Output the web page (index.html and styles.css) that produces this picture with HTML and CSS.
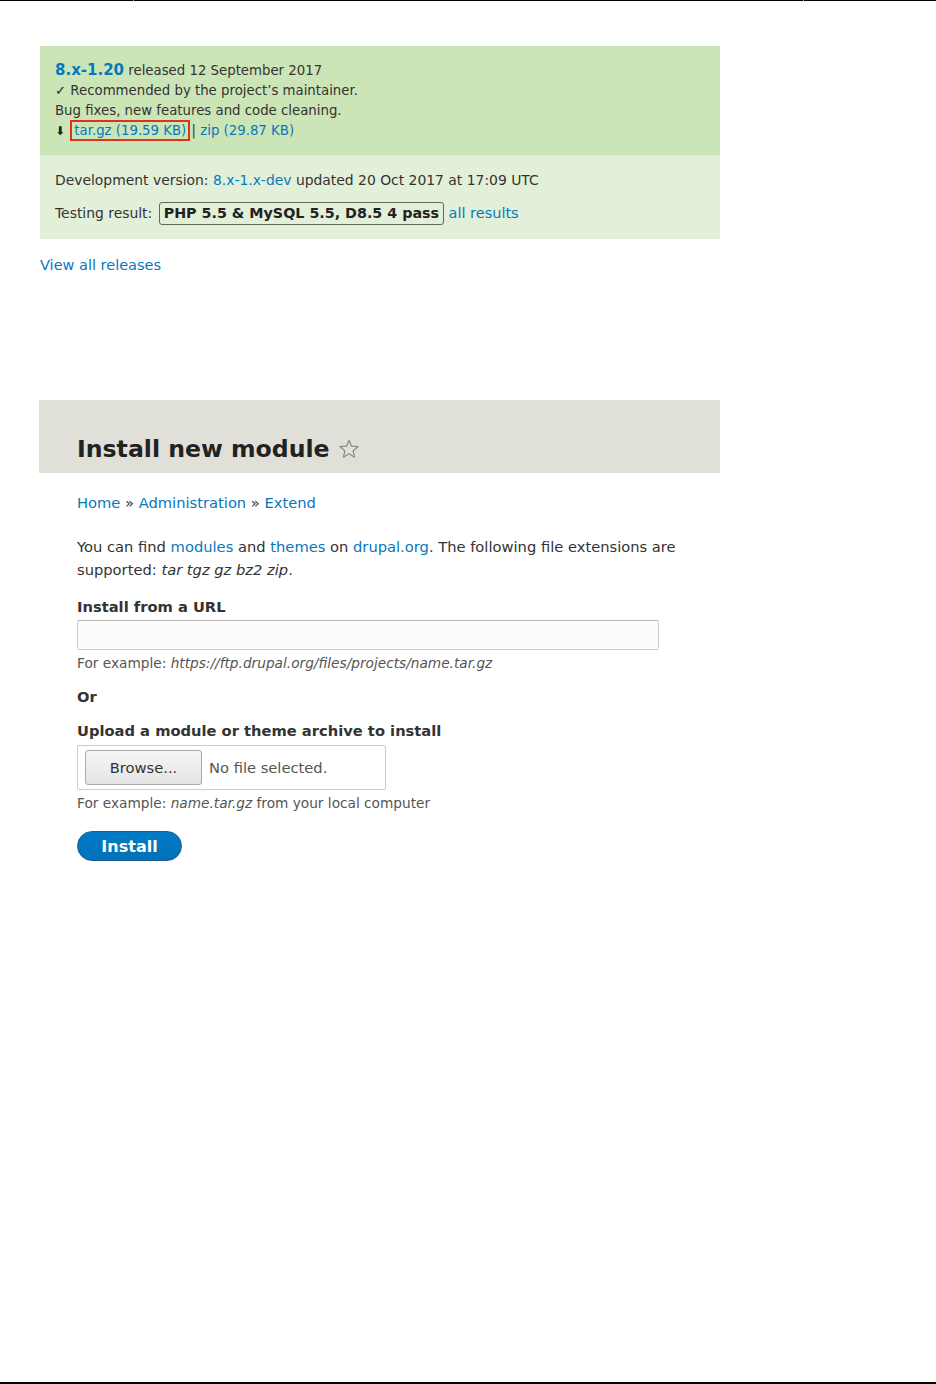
FILE: index.html
```html
<!DOCTYPE html>
<html lang="en">
<head>
    <meta charset="UTF-8">
    <title>Install new module</title>
    <link rel="stylesheet" href="styles.css">
</head>
<body>

    <div class="topline">
        <span class="seg seg1"></span>
        <span class="seg seg2"></span>
        <span class="seg seg3"></span>
    </div>

    <!-- release block -->
    <div class="release">
        <div class="rec">
            <p><a href="#" class="ver">8.x-1.20</a> released 12 September 2017</p>
            <p>&#10003; Recommended by the project&rsquo;s maintainer.</p>
            <p>Bug fixes, new features and code cleaning.</p>
            <p><span class="dl">&#11015;</span> <a href="#" class="hl">tar.gz (19.59 KB)</a> | <a href="#">zip (29.87 KB)</a></p>
        </div>
        <div class="dev">
            <p>Development version: <a href="#">8.x-1.x-dev</a> updated 20 Oct 2017 at 17:09 UTC</p>
            <p class="test">Testing result: <span class="pass">PHP 5.5 &amp; MySQL 5.5, D8.5 4 pass</span> <a href="#">all results</a></p>
        </div>
    </div>
    <a href="#" class="allrel">View all releases</a>

    <!-- install page -->
    <div class="page">
        <div class="head">
            <h1>Install new module
                <svg class="star" width="22" height="22" viewBox="0 0 24 24">
                    <path d="M12 2.5l2.8 6.4 6.9.6-5.2 4.6 1.6 6.8L12 17.3l-6.1 3.6 1.6-6.8-5.2-4.6 6.9-.6z" fill="none" stroke="#8a8a80" stroke-width="1.3" stroke-linejoin="round"/>
                </svg>
            </h1>
        </div>
        <div class="content">
            <div class="crumbs"><a href="#">Home</a> &raquo; <a href="#">Administration</a> &raquo; <a href="#">Extend</a></div>

            <p class="intro">You can find <a href="#">modules</a> and <a href="#">themes</a> on <a href="#">drupal.org</a>. The following file extensions are supported: <em>tar tgz gz bz2 zip</em>.</p>

            <label class="lbl">Install from a URL</label>
            <input type="text" class="url">
            <div class="desc">For example: <em>https://ftp.drupal.org/files/projects/name.tar.gz</em></div>

            <div class="lbl or">Or</div>

            <label class="lbl up">Upload a module or theme archive to install</label>
            <div class="file">
                <span class="browse">Browse...</span>
                <span class="nofile">No file selected.</span>
            </div>
            <div class="desc">For example: <em>name.tar.gz</em> from your local computer</div>

            <button class="install">Install</button>
        </div>
    </div>

    <div class="bottomline"></div>

</body>
</html>
```

FILE: styles.css
```css
/*初始化*/
html,body{
    margin: 0;
    padding: 0;
}
body{
    height: 1384px;
    display: flex;
    flex-direction: column;
    font-family: "DejaVu Sans", sans-serif;
    color: #333;
    background: #fff;
}
p{
    margin: 0;
}
a{
    color: #0678be;
    text-decoration: none;
}

/*顶部和底部的线*/
.topline{
    display: flex;
    gap: 1px;
    height: 1px;
    background: #999;
}
.seg{
    background: #000;
}
.seg1{ width: 133px; }
.seg2{ width: 669px; }
.seg3{ flex: 1; }

.bottomline{
    margin-top: auto;
    height: 2px;
    background: #000;
}

/*1.发布信息*/
.release{
    width: 680px;
    margin: 45px 0 0 40px;
    color: #333;
}
.rec{
    background: #cce5b6;
    height: 109px;
    box-sizing: border-box;
    padding: 14px 15px 0;
    line-height: 20px;
    font-size: 13.3px;
}
.ver{
    font-weight: bold;
    font-size: 15px;
}
.dl{
    font-size: 12px;
    color: #222;
}
.hl{
    outline: 2px solid #e0301e;
    outline-offset: 1px;
    padding: 0 1px;
    margin-left: 4px;
}
.dev{
    background: #e3f0d9;
    height: 84px;
    box-sizing: border-box;
    padding: 15px 15px 0;
    line-height: 20px;
    font-size: 13.9px;
}
.test{
    margin-top: 12px;
}
.pass{
    display: inline-block;
    border: 1px solid #5d6b55;
    border-radius: 3px;
    padding: 0 4px;
    margin-left: 2px;
    font-weight: bold;
    font-size: 14.3px;
    color: #222;
    line-height: 21px;
}
.test a{
    font-size: 14.5px;
}
.allrel{
    margin: 16px 0 0 40px;
    font-size: 14.5px;
    line-height: 20px;
    align-self: flex-start;
}

/*2.安装模块页面*/
.page{
    width: 681px;
    margin: 125px 0 0 39px;
}
.head{
    background: #e1e0d8;
    height: 73px;
    padding: 0 38px;
    box-sizing: border-box;
    display: flex;
    align-items: flex-end;
}
.head h1{
    margin: 0 0 10px;
    font-size: 23.6px;
    color: #222;
    display: flex;
    align-items: center;
    gap: 8px;
}
.content{
    padding: 20px 38px 0;
    font-size: 14.7px;
}
.crumbs{
    line-height: 20px;
}
.intro{
    margin-top: 22px;
    line-height: 23px;
}
.lbl{
    display: block;
    font-weight: bold;
    margin-top: 16px;
    line-height: 20px;
}
.or{
    margin-top: 14px;
}
.up{
    margin-top: 14px;
}
.url{
    display: block;
    width: 582px;
    height: 30px;
    box-sizing: border-box;
    margin-top: 3px;
    border: 1px solid #ccc;
    border-top-color: #b8b8b8;
    border-radius: 2px;
    background: #fcfcfa;
}
.desc{
    font-size: 13.7px;
    color: #555;
    margin-top: 3px;
    line-height: 20px;
}
.file{
    display: flex;
    align-items: center;
    width: 309px;
    height: 45px;
    box-sizing: border-box;
    margin-top: 4px;
    border: 1px solid #ccc;
    border-radius: 2px;
    padding: 0 7px;
    gap: 7px;
}
.browse{
    width: 117px;
    height: 35px;
    box-sizing: border-box;
    border: 1px solid #aaa;
    border-radius: 3px;
    background: linear-gradient(#f6f6f6, #e4e4e4);
    display: flex;
    align-items: center;
    justify-content: center;
    color: #333;
}
.nofile{
    color: #555;
}
.install{
    display: block;
    margin-top: 18px;
    width: 105px;
    height: 30px;
    border: 1px solid #1e5c90;
    border-radius: 15px;
    background: linear-gradient(#007bc6, #0071b8);
    color: #fff;
    font-family: "DejaVu Sans", sans-serif;
    font-weight: bold;
    font-size: 16px;
}
```
